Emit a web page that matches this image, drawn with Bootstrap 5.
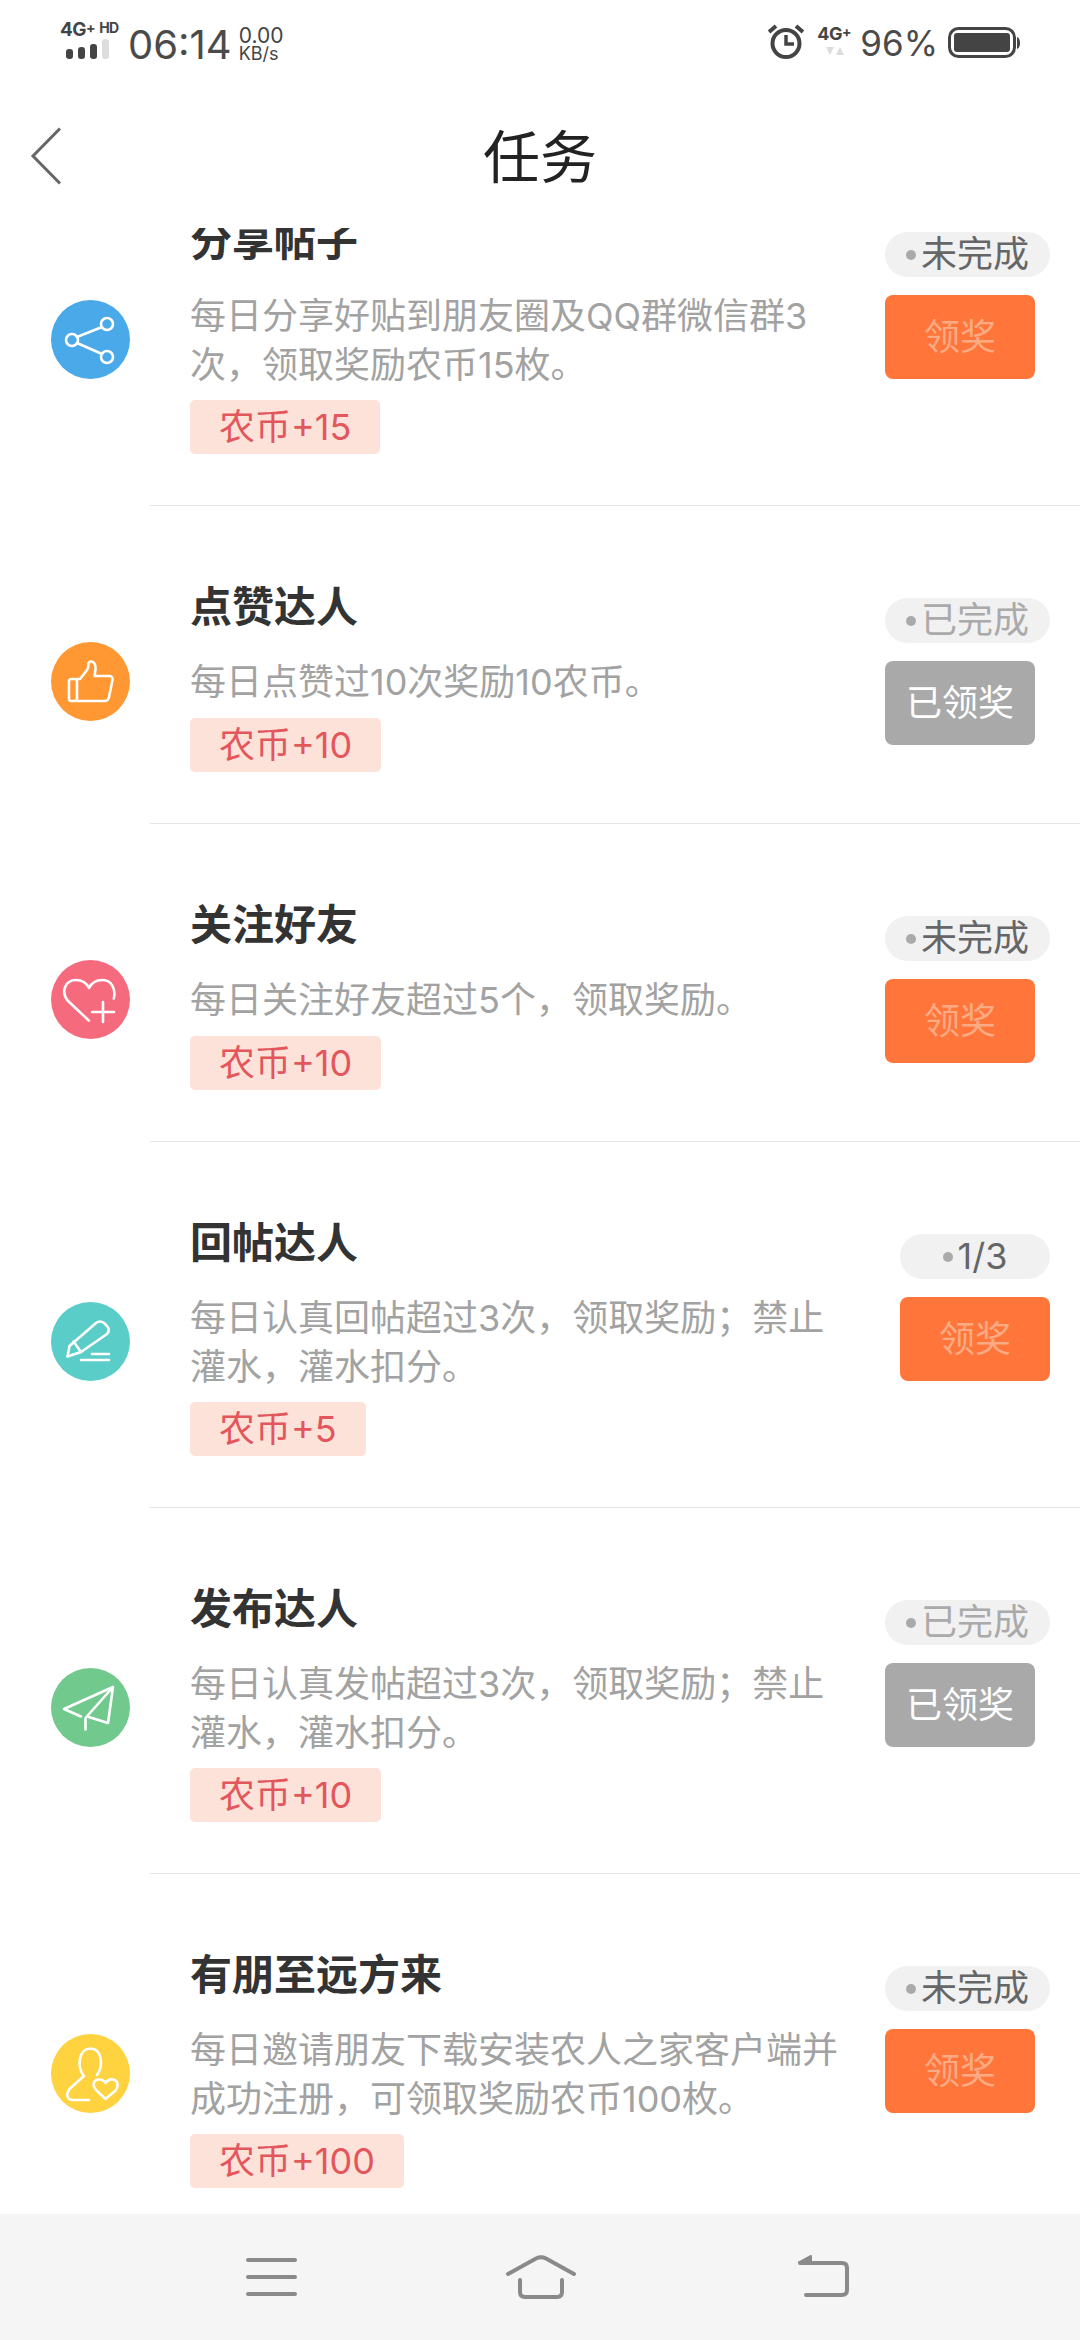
<!DOCTYPE html>
<html lang="zh-CN">
<head>
  <meta charset="UTF-8">
  <meta name="viewport" content="width=device-width, initial-scale=1">
  <title>任务</title>
  <link href="https://cdn.jsdelivr.net/npm/bootstrap@5.3.3/dist/css/bootstrap.min.css" rel="stylesheet">
  <style>
    body {
      background-color: #fff;
      font-family: Inter, "Noto Sans CJK SC", sans-serif;
    }
    .app-shell { width: 1080px; height: 2340px; }

    .status-bar { height: 72px; padding: 21px 60px 0 60px; color: #444; }
    .net-box { width: 64px; }
    .net-type { font-size: 19px; font-weight: 700; line-height: 17px; white-space: nowrap; letter-spacing: -.5px; }
    .net-type sup { font-size: 14px; top: -3px; vertical-align: baseline; position: relative; }
    .sig-bars { gap: 5px; margin: 1px 0 0 6px; align-items: flex-end; }
    .sig-bars i { display: block; width: 7px; border-radius: 3px; background: #444; }
    .sig-bars i:nth-child(1) { height: 10px; }
    .sig-bars i:nth-child(2) { height: 12px; }
    .sig-bars i:nth-child(3) { height: 15px; }
    .sig-bars i:nth-child(4) { height: 20px; background: #ddd; }
    .clock { font-size: 40px; line-height: 44px; margin-left: 4px; margin-top: 2px; font-weight: 400; color: #4a4a4a; }
    .speed { font-size: 21px; line-height: 19px; margin-left: 7px; margin-top: 5px; text-align: left; }
    .speed span { display: block; font-size: 18px; line-height: 17px; }
    .alarm-icon { margin-top: 3px; }
    .net-right { font-size: 18px; font-weight: 700; line-height: 17px; margin-left: 13px; width: 36px; margin-top: 4px; letter-spacing: -.5px; }
    .net-right sup { font-size: 14px; top: -3px; vertical-align: baseline; position: relative; }
    .net-tri { display: block; margin: 5px auto 0; }
    .batt-text { font-size: 35px; line-height: 44px; margin-left: 7px; margin-right: 10px; color: #4a4a4a; }
    .batt-icon { margin-top: 6px; }

    .title-bar { height: 156px; }
    .title-bar h1 { font-size: 57px; font-weight: 400; color: #222; line-height: 1; margin: 14px 0 0; }
    .back-btn { left: 30px; top: 55px; }

    .task-scroll { min-height: 0; }
    .task-inner { margin-top: -88px; }
    .task-rule { height: 1px; margin-left: 150px; background: #e6e6e6; }
    .task-row { height: 317px; padding-top: 71px; }
    .task-row.two-line { height: 365px; }
    .task-icon { width: 79px; height: 79px; margin-left: 51px; margin-right: 60px; margin-bottom: 37px; }
    .task-icon svg { display: block; }
    .task-main { width: 695px; }
    .task-title { font-size: 42px; line-height: 60px; font-weight: 700; color: #333; margin: 0 0 21px; }
    .task-desc { font-size: 36px; line-height: 48.5px; color: #a2a2a2; margin: 0 0 11px; white-space: nowrap; }
    .coin-tag { height: 54px; padding: 0 29px; background: #fde2da; color: #e2565c; font-size: 36px; border-radius: 5px; }

    .task-side { margin-top: 21px; }
    .task-side.short { margin-left: 15px; }
    .state-pill { height: 45px; min-width: 150px; padding: 0 21px; border-radius: 23px; background: #f1f1f1; font-size: 36px; color: #666; line-height: 45px; gap: 5px; }
    .state-pill::before { content: ""; width: 10px; height: 10px; border-radius: 50%; background: #aaa; flex: none; }
    .state-pill.finished { color: #aaa; }
    .prize-btn { display: block; width: 150px; height: 84px; margin-top: 18px; padding: 0; border: 0; border-radius: 8px; font-size: 36px; background: #ff753a; color: #fbab84; }
    .prize-btn.taken { background: #a9a9a9; color: #fff; }

    .nav-foot { height: 126px; padding-left: 246px; background: #f5f5f5; }
    .nav-home { margin-left: 207px; }
    .nav-back { margin-left: 219px; }
  </style>
</head>
<body>

<div class="app-shell d-flex flex-column overflow-hidden">
  <!-- status bar -->
  <div class="status-bar d-flex align-items-start justify-content-between flex-shrink-0">
    <div class="d-flex align-items-start">
      <div class="net-box">
        <div class="net-type">4G<sup>+</sup> <sup>HD</sup></div>
        <div class="sig-bars d-flex"><i></i><i></i><i></i><i></i></div>
      </div>
      <div class="clock">06:14</div>
      <div class="speed">0.00<span>KB/s</span></div>
    </div>
    <div class="d-flex align-items-start">
      <svg class="alarm-icon" width="36" height="36" viewBox="0 0 36 36" fill="none" stroke="#444">
        <circle cx="18" cy="19.5" r="13.5" stroke-width="4"/>
        <path d="M18 11v9h8" stroke-width="3.5"/>
        <path d="M1 8 8 2M35 8 28 2" stroke-width="4"/>
      </svg>
      <div class="net-right">4G<sup>+</sup>
        <svg class="net-tri" width="20" height="9" viewBox="0 0 20 9" fill="#ddd"><path d="M1 0h8L5 8zM11 8h8l-4-8z"/></svg>
      </div>
      <div class="batt-text">96%</div>
      <svg class="batt-icon" width="72" height="32" viewBox="0 0 72 32">
        <rect x="1.5" y="1.5" width="65" height="28" rx="9" fill="none" stroke="#444" stroke-width="3"/>
        <rect x="6" y="6" width="56" height="19" rx="3" fill="#444"/>
        <path d="M69 10q3 1 3 6t-3 6z" fill="#444"/>
      </svg>
    </div>
  </div>

  <!-- title -->
  <div class="title-bar position-relative d-flex align-items-center justify-content-center flex-shrink-0">
    <svg class="back-btn position-absolute" width="32" height="58" viewBox="0 0 32 58" fill="none" stroke="#666" stroke-width="3">
      <path d="M30 1.500 3 29l27 27.500"/>
    </svg>
    <h1>任务</h1>
  </div>

  <!-- tasks, scrolled part way down -->
  <div class="task-scroll flex-grow-1 overflow-hidden">
    <div id="task-list" class="task-inner"></div>
  </div>

  <!-- system nav -->
  <div class="nav-foot d-flex align-items-center flex-shrink-0">
    <svg width="52" height="40" viewBox="0 0 52 40" fill="none" stroke="#8a8a8a" stroke-width="4" stroke-linecap="round">
      <path d="M2 3h47M2 20h47M2 37h47"/>
    </svg>
    <svg class="nav-home" width="72" height="46" viewBox="0 0 72 46" fill="none" stroke="#8a8a8a" stroke-width="4" stroke-linecap="round" stroke-linejoin="round">
      <path d="M3 20 31 4.500q5-2.500 10 0L69 20"/>
      <path d="M15 26v12q0 5 5 5h32q5 0 5-5V26"/>
    </svg>
    <svg class="nav-back" width="54" height="46" viewBox="0 0 54 46" fill="none" stroke="#8a8a8a" stroke-width="4" stroke-linecap="round" stroke-linejoin="round">
      <path d="M4 9h42q5 0 5 5v22q0 5-5 5H10"/>
      <path d="M3 8.500 15 2v6.500z" fill="#8a8a8a" stroke-width="2"/>
    </svg>
  </div>
</div>

<script src="https://cdn.jsdelivr.net/npm/bootstrap@5.3.3/dist/js/bootstrap.bundle.min.js"></script>
<script>
  // icon strokes, drawn on a 79 unit circle
  const icons = {
    share: '<path d="M26 37 51 27M26 43l25 11"/><circle cx="56" cy="24" r="6"/><circle cx="21" cy="40" r="6"/><circle cx="56" cy="57" r="6"/>',
    thumb: '<rect x="18" y="37" width="8" height="22" rx="2.500"/><path d="M26 37h3l7-9q1.500-2 1.500-6 0-3 3-2.500 4.500 1 4 8L43.500 34H58q4 0 3.500 4L58 55q-.7 4-4.500 4H26"/>',
    heart: '<path d="M37.800 60.500 17 41C9 31 15 20 25 20c6 0 10.500 3 13 8 2.500-5 7-8 13.500-8 9 0 13.500 9 11.300 18.500"/><path d="M41 52h22M52 42v20"/>',
    pencil: '<path d="M16.500 54.500 18.500 44 45 21q4-3 8 0l3 3q3.500 4 0 8L30 50z"/><path d="M22.500 39.500 30 50M30 58h28M41 52h17"/>',
    plane: '<path d="M62 19 13 41l17 7.500M62 19l-5 36-21-6.500M62 19 34.500 50v11.500"/>',
    friend: '<path d="M32.800 42C26 33 27 15 39.500 14.500 52 15 52 33 46 41"/><path d="M32.800 42 18.500 55Q13 64 21 66h17"/><path d="M54.500 65 45 56c-5-6-1-11 3-10.500 3 0 6 2 6.500 3.500 1.500-2 4.500-4 7.500-3.500 5 .5 6 6.500 2.500 11z"/>'
  };

  const tasks = [
    { icon: 'share', color: '#4aa9e9', title: '分享帖子', desc: '每日分享好贴到朋友圈及QQ群微信群3<br>次，领取奖励农币15枚。', coin: 15, state: '未完成', taken: false },
    { icon: 'thumb', color: '#ff9733', title: '点赞达人', desc: '每日点赞过10次奖励10农币。', coin: 10, state: '已完成', taken: true },
    { icon: 'heart', color: '#f66a7d', title: '关注好友', desc: '每日关注好友超过5个，领取奖励。', coin: 10, state: '未完成', taken: false },
    { icon: 'pencil', color: '#5bcdc8', title: '回帖达人', desc: '每日认真回帖超过3次，领取奖励；禁止<br>灌水，灌水扣分。', coin: 5, state: '1/3', taken: false },
    { icon: 'plane', color: '#72c98e', title: '发布达人', desc: '每日认真发帖超过3次，领取奖励；禁止<br>灌水，灌水扣分。', coin: 10, state: '已完成', taken: true },
    { icon: 'friend', color: '#ffd23f', title: '有朋至远方来', desc: '每日邀请朋友下载安装农人之家客户端并<br>成功注册，可领取奖励农币100枚。', coin: 100, state: '未完成', taken: false }
  ];

  const list = document.getElementById('task-list');

  tasks.forEach((task, i) => {
    if (i > 0) {
      const rule = document.createElement('div');
      rule.className = 'task-rule';
      list.appendChild(rule);
    }
    const row = document.createElement('div');
    const twoLine = task.desc.includes('<br>');
    row.className = 'task-row d-flex' + (twoLine ? ' two-line' : '');
    row.innerHTML = `
      <div class="task-icon rounded-circle flex-shrink-0 align-self-center" style="background:${task.color}">
        <svg width="79" height="79" viewBox="0 0 79 79" fill="none" stroke="#fff" stroke-width="2.600" stroke-linecap="round" stroke-linejoin="round">${icons[task.icon]}</svg>
      </div>
      <div class="task-main flex-shrink-0">
        <h5 class="task-title">${task.title}</h5>
        <p class="task-desc">${task.desc}</p>
        <span class="coin-tag d-inline-flex align-items-center">农币+${task.coin}</span>
      </div>
      <div class="task-side${task.state === '1/3' ? ' short' : ''}">
        <div class="state-pill d-inline-flex align-items-center justify-content-center${task.taken ? ' finished' : ''}">${task.state}</div>
        <button class="btn prize-btn${task.taken ? ' taken' : ''}">${task.taken ? '已领奖' : '领奖'}</button>
      </div>
    `;
    list.appendChild(row);
  });
</script>

</body>
</html>
